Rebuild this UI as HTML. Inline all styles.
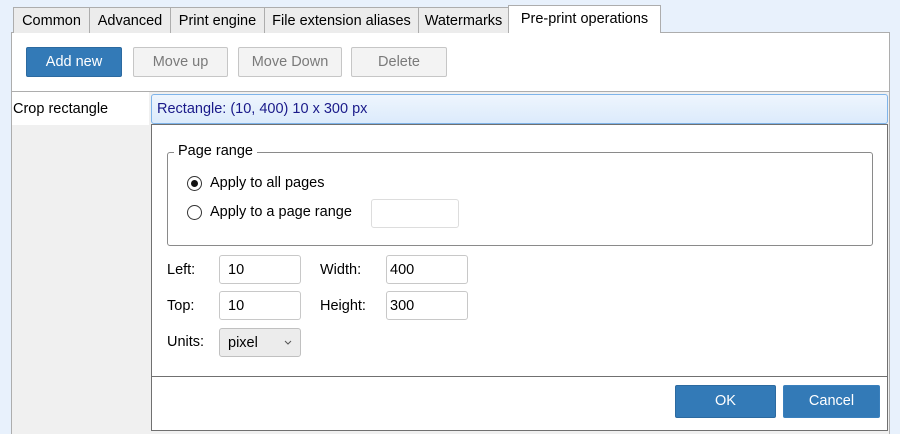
<!DOCTYPE html>
<html><head><style>
*{box-sizing:border-box;margin:0;padding:0}
body{width:900px;height:434px;background:#e8f1fc;font-family:"Liberation Sans",sans-serif;font-size:14.5px;color:#000;position:relative;overflow:hidden}
.a{position:absolute}
.tab{position:absolute;top:7px;height:26px;background:#ececec;border:1px solid #adadad;border-bottom:none;padding:5px 0 0;text-align:center;font-size:14.5px;white-space:nowrap}
.btn{position:absolute;height:30px;border:1px solid #c6c6c6;background:#f3f3f3;color:#7a7a7a;text-align:center;line-height:28px;border-radius:2px}
.blue{background:#337ab7;border-color:#2c6aa0;color:#fff}
.inp{position:absolute;height:29px;border:1px solid #c8c8c8;border-radius:3px;background:#fff;padding:6px 0 0 8px;width:82px}
.lbl{position:absolute}
.radio{position:absolute;width:15px;height:15px;border:1px solid #333;border-radius:50%;background:#fff}
</style></head><body>
<div class="a" style="left:11px;top:32px;width:879px;height:402px;background:#fff;border:1px solid #adadad"></div>
<div class="tab" style="left:13px;width:77px">Common</div>
<div class="tab" style="left:89px;width:82px">Advanced</div>
<div class="tab" style="left:170px;width:95px">Print engine</div>
<div class="tab" style="left:264px;width:155px">File extension aliases</div>
<div class="tab" style="left:418px;width:91px">Watermarks</div>
<div class="tab" style="left:508px;top:5px;width:153px;height:28px;background:#fff;padding-top:5px">Pre-print operations</div>
<div class="btn blue" style="left:26px;top:47px;width:96px">Add new</div>
<div class="btn" style="left:133px;top:47px;width:95px">Move up</div>
<div class="btn" style="left:238px;top:47px;width:104px">Move Down</div>
<div class="btn" style="left:351px;top:47px;width:96px">Delete</div>
<div class="a" style="left:12px;top:91px;width:877px;height:343px;background:#f0f0f0;border-top:1px solid #adadad"></div>
<div class="a" style="left:12px;top:92px;width:137px;height:33px;background:#fff;padding:9px 0 0 1px">Crop rectangle</div>
<div class="a" style="left:151px;top:94px;width:737px;height:30px;border:1px solid #7eb4ea;border-radius:3px;background:linear-gradient(#eef5fd,#dcebfc);color:#1a1a8a;padding:6px 0 0 5px">Rectangle: (10, 400) 10 x 300 px</div>
<div class="a" style="left:151px;top:124px;width:737px;height:307px;background:#fff;border:1px solid #707070"></div>
<div class="a" style="left:152px;top:376px;width:735px;height:1px;background:#707070"></div>
<div class="a" style="left:167px;top:152px;width:706px;height:94px;border:1px solid #8a8a8a;border-radius:3px"></div>
<div class="a" style="left:174px;top:143px;background:#fff;padding:0 4px">Page range</div>
<div class="radio" style="left:187px;top:176px"><div style="position:absolute;left:3px;top:3px;width:7px;height:7px;border-radius:50%;background:#111"></div></div>
<div class="lbl" style="left:210px;top:175px">Apply to all pages</div>
<div class="radio" style="left:187px;top:205px"></div>
<div class="lbl" style="left:210px;top:204px">Apply to a page range</div>
<div class="inp" style="left:371px;top:199px;width:88px;border-color:#ddd"></div>
<div class="lbl" style="left:167px;top:262px">Left:</div>
<div class="inp" style="left:219px;top:255px">10</div>
<div class="lbl" style="left:320px;top:262px">Width:</div>
<div class="inp" style="left:386px;top:255px;padding-left:3px">400</div>
<div class="lbl" style="left:167px;top:298px">Top:</div>
<div class="inp" style="left:219px;top:291px">10</div>
<div class="lbl" style="left:320px;top:298px">Height:</div>
<div class="inp" style="left:386px;top:291px;padding-left:3px">300</div>
<div class="lbl" style="left:167px;top:334px">Units:</div>
<div class="inp" style="left:219px;top:328px;background:#ececec;border-color:#c0c0c0">pixel<svg style="position:absolute;left:64px;top:11px" width="8" height="5"><path d="M1 1 L4 4 L7 1" stroke="#555" fill="none" stroke-width="1"/></svg></div>
<div class="btn blue" style="left:675px;top:385px;width:101px;height:33px;line-height:31px">OK</div>
<div class="btn blue" style="left:783px;top:385px;width:97px;height:33px;line-height:31px;border-color:#3a80bd">Cancel</div>
</body></html>
